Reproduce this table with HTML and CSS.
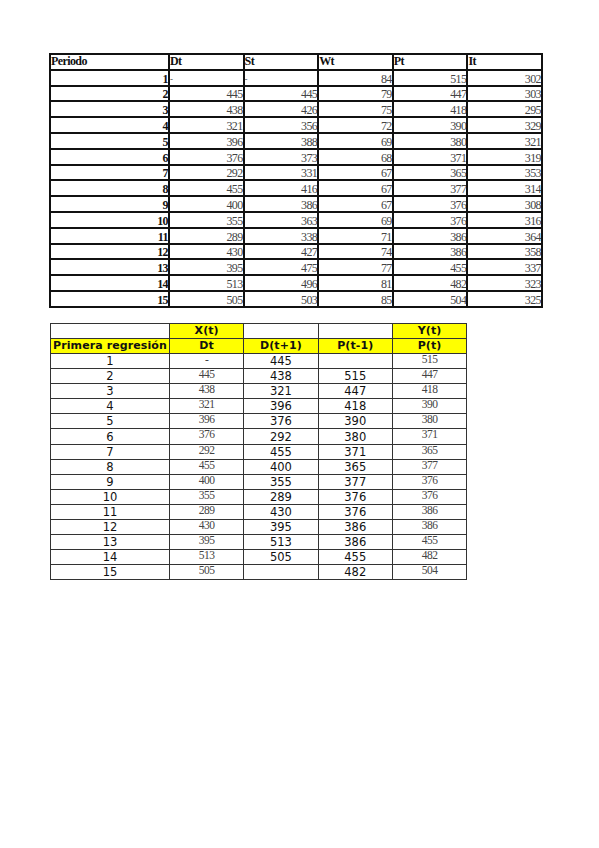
FILE: index.html
```html
<!DOCTYPE html>
<html>
<head>
<meta charset="utf-8">
<link rel="stylesheet" href="styles.css">
</head>
<body>
<div class="page">
<table class="t1">
<colgroup><col class="c1"><col class="cn"><col class="cn"><col class="cn"><col class="cn"><col class="cn"></colgroup>
<tr class="hd"><td>Periodo</td><td>Dt</td><td>St</td><td>Wt</td><td>Pt</td><td>It</td></tr>
<tr><th>1</th><td class="l">-</td><td class="l">-</td><td>84</td><td>515</td><td>302</td></tr>
<tr><th>2</th><td>445</td><td>445</td><td>79</td><td>447</td><td>303</td></tr>
<tr><th>3</th><td>438</td><td>426</td><td>75</td><td>418</td><td>295</td></tr>
<tr><th>4</th><td>321</td><td>356</td><td>72</td><td>390</td><td>329</td></tr>
<tr><th>5</th><td>396</td><td>388</td><td>69</td><td>380</td><td>321</td></tr>
<tr><th>6</th><td>376</td><td>373</td><td>68</td><td>371</td><td>319</td></tr>
<tr><th>7</th><td>292</td><td>331</td><td>67</td><td>365</td><td>353</td></tr>
<tr><th>8</th><td>455</td><td>416</td><td>67</td><td>377</td><td>314</td></tr>
<tr><th>9</th><td>400</td><td>386</td><td>67</td><td>376</td><td>308</td></tr>
<tr><th>10</th><td>355</td><td>363</td><td>69</td><td>376</td><td>316</td></tr>
<tr><th>11</th><td>289</td><td>338</td><td>71</td><td>386</td><td>364</td></tr>
<tr><th>12</th><td>430</td><td>427</td><td>74</td><td>386</td><td>358</td></tr>
<tr><th>13</th><td>395</td><td>475</td><td>77</td><td>455</td><td>337</td></tr>
<tr><th>14</th><td>513</td><td>496</td><td>81</td><td>482</td><td>323</td></tr>
<tr><th>15</th><td>505</td><td>503</td><td>85</td><td>504</td><td>325</td></tr>
</table>

<table class="t2">
<colgroup><col class="c1"><col class="cn"><col class="cn"><col class="cn"><col class="cn"></colgroup>
<tr class="h"><td></td><td class="y">X(t)</td><td></td><td></td><td class="y">Y(t)</td></tr>
<tr class="h"><td class="y">Primera regresión</td><td class="y">Dt</td><td class="y">D(t+1)</td><td class="y">P(t-1)</td><td class="y">P(t)</td></tr>
<tr><td>1</td><td class="s">-</td><td>445</td><td></td><td class="s">515</td></tr>
<tr><td>2</td><td class="s">445</td><td>438</td><td>515</td><td class="s">447</td></tr>
<tr><td>3</td><td class="s">438</td><td>321</td><td>447</td><td class="s">418</td></tr>
<tr><td>4</td><td class="s">321</td><td>396</td><td>418</td><td class="s">390</td></tr>
<tr><td>5</td><td class="s">396</td><td>376</td><td>390</td><td class="s">380</td></tr>
<tr><td>6</td><td class="s">376</td><td>292</td><td>380</td><td class="s">371</td></tr>
<tr><td>7</td><td class="s">292</td><td>455</td><td>371</td><td class="s">365</td></tr>
<tr><td>8</td><td class="s">455</td><td>400</td><td>365</td><td class="s">377</td></tr>
<tr><td>9</td><td class="s">400</td><td>355</td><td>377</td><td class="s">376</td></tr>
<tr><td>10</td><td class="s">355</td><td>289</td><td>376</td><td class="s">376</td></tr>
<tr><td>11</td><td class="s">289</td><td>430</td><td>376</td><td class="s">386</td></tr>
<tr><td>12</td><td class="s">430</td><td>395</td><td>386</td><td class="s">386</td></tr>
<tr><td>13</td><td class="s">395</td><td>513</td><td>386</td><td class="s">455</td></tr>
<tr><td>14</td><td class="s">513</td><td>505</td><td>455</td><td class="s">482</td></tr>
<tr><td>15</td><td class="s">505</td><td></td><td>482</td><td class="s">504</td></tr>
</table>
</div>
</body>
</html>
```
FILE: styles.css
```css
html, body {
  margin: 0;
  padding: 0;
  background: #ffffff;
}
.page {
  padding: 53px 0 0 49px;
}
table {
  border-collapse: collapse;
  table-layout: fixed;
}
.t1 {
  width: 493px;
  font-family: "Liberation Serif", "Times New Roman", serif;
  font-size: 12px;
  color: #444;
}
.t1 .c1 { width: 119px; }
.t1 .cn { width: 74.6px; }
.t1 td, .t1 th {
  border: 2px solid #111;
  height: 13.8px;
  padding: 0;
  line-height: 12px;
  text-align: right;
  vertical-align: bottom;
  letter-spacing: -0.6px;
  white-space: nowrap;
  overflow: hidden;
}
.t1 th {
  font-weight: bold;
  color: #111;
}
.t1 .hd td {
  text-align: left;
  font-weight: bold;
  color: #111;
  vertical-align: top;
}
.t1 td.l {
  text-align: left;
  font-size: 9px;
}
.t2 {
  margin-top: 15px;
  margin-left: 1px;
  width: 416px;
  font-family: "DejaVu Sans", Verdana, sans-serif;
  font-size: 11.5px;
  color: #111;
}
.t2 .c1 { width: 119px; }
.t2 .cn { width: 74.3px; }
.t2 td {
  border: 1px solid #333;
  height: 14.1px;
  padding: 0;
  line-height: 14px;
  text-align: center;
  vertical-align: bottom;
  white-space: nowrap;
  overflow: hidden;
}
.t2 .h td {
  font-weight: bold;
  font-size: 11px;
  letter-spacing: 0.1px;
}
.t2 td.y {
  background: #ffff00;
}
.t2 td.s {
  font-family: "Liberation Serif", "Times New Roman", serif;
  font-size: 11.5px;
  color: #444;
  vertical-align: top;
  line-height: 11px;
  letter-spacing: -0.5px;
}
```
